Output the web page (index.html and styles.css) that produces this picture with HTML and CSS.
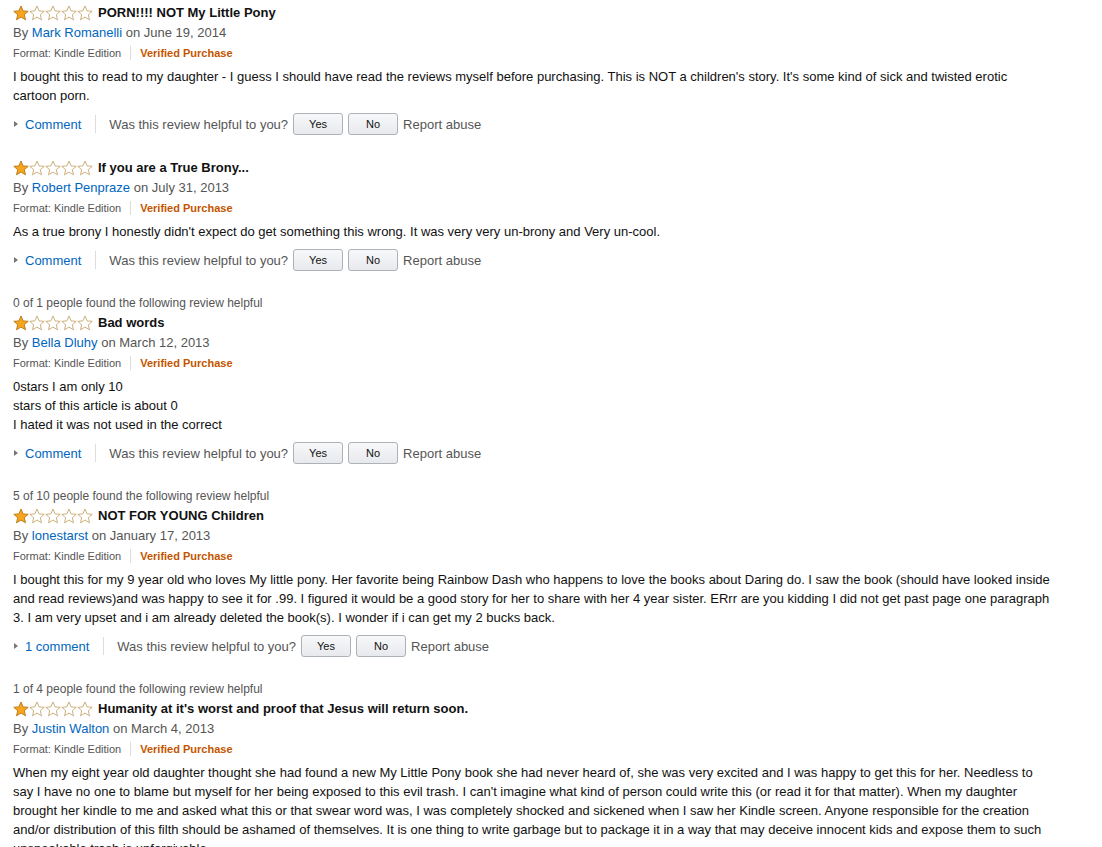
FILE: index.html
```html
<!DOCTYPE html>
<html lang="en">
<head>
    <meta charset="UTF-8">
    <title>Customer Reviews</title>
    <link rel="stylesheet" href="styles.css">
</head>
<body>
    <svg width="0" height="0" class="defs">
        <defs>
            <polygon id="star" points="8,1 10.1,5.9 15.2,6.3 11.3,9.7 12.5,14.8 8,12.1 3.5,14.8 4.7,9.7 0.8,6.3 5.9,5.9"/>
        </defs>
    </svg>

    <div class="reviews">
        <div class="review">
            <div class="review-head">
                <svg class="stars" width="80" height="16" viewBox="0 0 80 16">
                    <use href="#star" class="on" x="0"/>
                    <use href="#star" class="off" x="16"/>
                    <use href="#star" class="off" x="32"/>
                    <use href="#star" class="off" x="48"/>
                    <use href="#star" class="off" x="64"/>
                </svg>
                <span class="review-title">PORN!!!! NOT My Little Pony</span>
            </div>
            <div class="byline">By <a href="#">Mark Romanelli</a> on June 19, 2014</div>
            <div class="format">Format: Kindle Edition<span class="sep"></span><span class="verified">Verified Purchase</span></div>
            <div class="review-text">I bought this to read to my daughter - I guess I should have read the reviews myself before purchasing. This is NOT a children's story. It's some kind of sick and twisted erotic cartoon porn.</div>
            <div class="actions">
                <span class="arrow"></span><a href="#">Comment</a><span class="sep"></span>
                <span class="ask">Was this review helpful to you?</span>
                <button>Yes</button><button>No</button>
                <span class="report">Report abuse</span>
            </div>
        </div>

        <div class="review">
            <div class="review-head">
                <svg class="stars" width="80" height="16" viewBox="0 0 80 16">
                    <use href="#star" class="on" x="0"/>
                    <use href="#star" class="off" x="16"/>
                    <use href="#star" class="off" x="32"/>
                    <use href="#star" class="off" x="48"/>
                    <use href="#star" class="off" x="64"/>
                </svg>
                <span class="review-title">If you are a True Brony...</span>
            </div>
            <div class="byline">By <a href="#">Robert Penpraze</a> on July 31, 2013</div>
            <div class="format">Format: Kindle Edition<span class="sep"></span><span class="verified">Verified Purchase</span></div>
            <div class="review-text">As a true brony I honestly didn't expect do get something this wrong. It was very very un-brony and Very un-cool.</div>
            <div class="actions">
                <span class="arrow"></span><a href="#">Comment</a><span class="sep"></span>
                <span class="ask">Was this review helpful to you?</span>
                <button>Yes</button><button>No</button>
                <span class="report">Report abuse</span>
            </div>
        </div>

        <div class="review">
            <div class="helpful-count">0 of 1 people found the following review helpful</div>
            <div class="review-head">
                <svg class="stars" width="80" height="16" viewBox="0 0 80 16">
                    <use href="#star" class="on" x="0"/>
                    <use href="#star" class="off" x="16"/>
                    <use href="#star" class="off" x="32"/>
                    <use href="#star" class="off" x="48"/>
                    <use href="#star" class="off" x="64"/>
                </svg>
                <span class="review-title">Bad words</span>
            </div>
            <div class="byline">By <a href="#">Bella Dluhy</a> on March 12, 2013</div>
            <div class="format">Format: Kindle Edition<span class="sep"></span><span class="verified">Verified Purchase</span></div>
            <div class="review-text">0stars I am only 10<br>stars of this article is about 0<br>I hated it was not used in the correct</div>
            <div class="actions">
                <span class="arrow"></span><a href="#">Comment</a><span class="sep"></span>
                <span class="ask">Was this review helpful to you?</span>
                <button>Yes</button><button>No</button>
                <span class="report">Report abuse</span>
            </div>
        </div>

        <div class="review">
            <div class="helpful-count">5 of 10 people found the following review helpful</div>
            <div class="review-head">
                <svg class="stars" width="80" height="16" viewBox="0 0 80 16">
                    <use href="#star" class="on" x="0"/>
                    <use href="#star" class="off" x="16"/>
                    <use href="#star" class="off" x="32"/>
                    <use href="#star" class="off" x="48"/>
                    <use href="#star" class="off" x="64"/>
                </svg>
                <span class="review-title">NOT FOR YOUNG Children</span>
            </div>
            <div class="byline">By <a href="#">lonestarst</a> on January 17, 2013</div>
            <div class="format">Format: Kindle Edition<span class="sep"></span><span class="verified">Verified Purchase</span></div>
            <div class="review-text">I bought this for my 9 year old who loves My little pony. Her favorite being Rainbow Dash who happens to love the books about Daring do. I saw the book (should have looked inside and read reviews)and was happy to see it for .99. I figured it would be a good story for her to share with her 4 year sister. ERrr are you kidding I did not get past page one paragraph 3. I am very upset and i am already deleted the book(s). I wonder if i can get my 2 bucks back.</div>
            <div class="actions">
                <span class="arrow"></span><a href="#">1 comment</a><span class="sep"></span>
                <span class="ask">Was this review helpful to you?</span>
                <button>Yes</button><button>No</button>
                <span class="report">Report abuse</span>
            </div>
        </div>

        <div class="review">
            <div class="helpful-count">1 of 4 people found the following review helpful</div>
            <div class="review-head">
                <svg class="stars" width="80" height="16" viewBox="0 0 80 16">
                    <use href="#star" class="on" x="0"/>
                    <use href="#star" class="off" x="16"/>
                    <use href="#star" class="off" x="32"/>
                    <use href="#star" class="off" x="48"/>
                    <use href="#star" class="off" x="64"/>
                </svg>
                <span class="review-title">Humanity at it's worst and proof that Jesus will return soon.</span>
            </div>
            <div class="byline">By <a href="#">Justin Walton</a> on March 4, 2013</div>
            <div class="format">Format: Kindle Edition<span class="sep"></span><span class="verified">Verified Purchase</span></div>
            <div class="review-text">When my eight year old daughter thought she had found a new My Little Pony book she had never heard of, she was very excited and I was happy to get this for her. Needless to say I have no one to blame but myself for her being exposed to this evil trash. I can't imagine what kind of person could write this (or read it for that matter). When my daughter brought her kindle to me and asked what this or that swear word was, I was completely shocked and sickened when I saw her Kindle screen. Anyone responsible for the creation and/or distribution of this filth should be ashamed of themselves. It is one thing to write garbage but to package it in a way that may deceive innocent kids and expose them to such unspeakable trash is unforgivable.</div>
        </div>
    </div>
</body>
</html>
```

FILE: styles.css
```css
body {
    font-family: Arial, "Liberation Sans", sans-serif;
    font-size: 13px;
    color: #111;
    margin: 0;
    padding: 2px 13px 0 13px;
    background: #fff;
}
.defs {
    position: absolute;
}
a {
    color: #0066c0;
    text-decoration: none;
}
.reviews {
    max-width: 1040px;
}
.review {
    margin-bottom: 22px;
}
.helpful-count {
    font-size: 12px;
    line-height: 17px;
    padding-top: 2px;
    color: #555;
}
.review-head {
    display: flex;
    align-items: center;
    height: 21px;
}
.stars {
    display: block;
    margin-right: 5px;
}
.stars .on {
    fill: #f7a51c;
    stroke: #b47614;
    stroke-width: 0.9;
}
.stars .off {
    fill: #fff;
    stroke: #c8a76e;
    stroke-width: 0.9;
}
.review-title {
    font-weight: bold;
    color: #111;
    margin-top: -1px;
}
.byline {
    line-height: 20px;
    color: #555;
}
.format {
    display: flex;
    align-items: center;
    font-size: 11px;
    line-height: 20px;
    color: #555;
}
.format .sep {
    display: inline-block;
    width: 1px;
    height: 14px;
    background: #ddd;
    margin: 0 9px;
}
.verified {
    color: #c45500;
    font-weight: bold;
}
.review-text {
    margin-top: 4px;
    line-height: 19px;
    color: #111;
}
.actions {
    display: flex;
    align-items: center;
    height: 22px;
    margin-top: 8px;
    color: #555;
}
.arrow {
    display: inline-block;
    width: 0;
    height: 0;
    border-top: 3px solid transparent;
    border-bottom: 3px solid transparent;
    border-left: 4px solid #777;
    margin: 0 7px 0 1px;
}
.actions .sep {
    display: inline-block;
    width: 1px;
    height: 18px;
    background: #ddd;
    margin: 0 13px 0 14px;
}
button {
    font-family: Arial, "Liberation Sans", sans-serif;
    font-size: 11px;
    color: #111;
    width: 50px;
    height: 22px;
    margin-left: 5px;
    padding: 0;
    border: 1px solid #adb1b8;
    border-radius: 3px;
    background: linear-gradient(#f7f8fa, #e7e9ec);
}
.report {
    margin-left: 5px;
}
```
